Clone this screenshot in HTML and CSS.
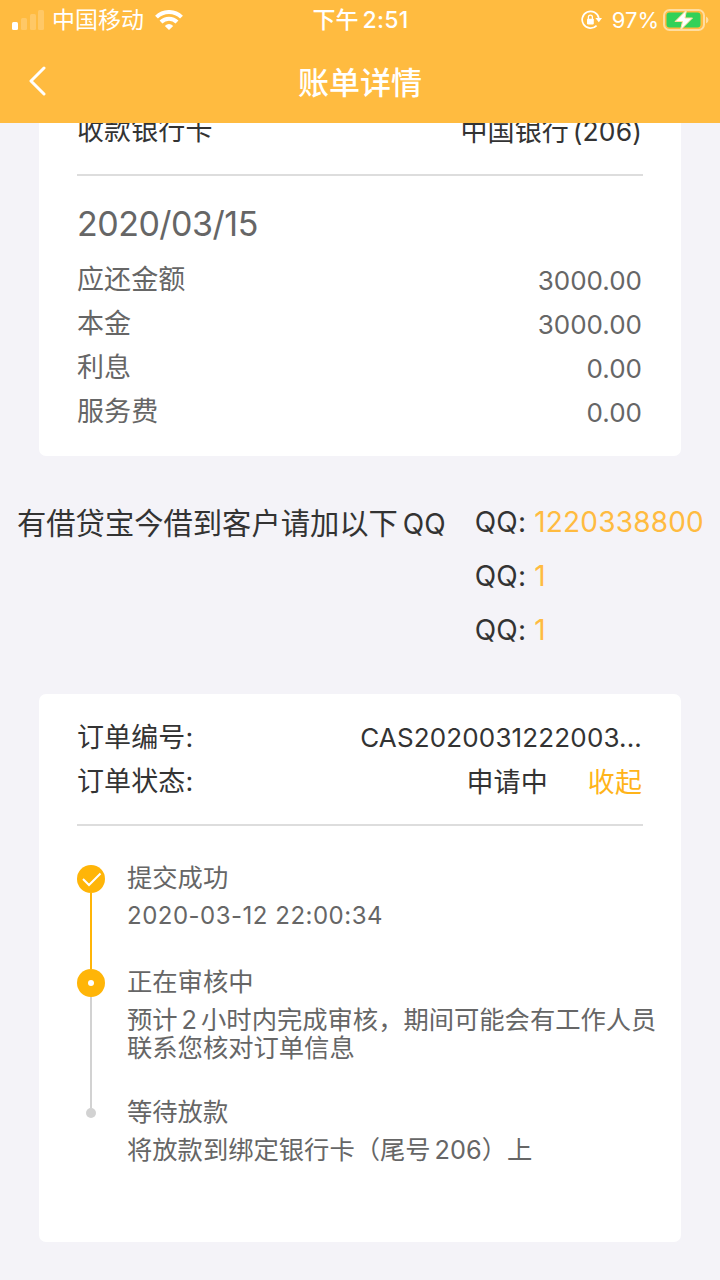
FILE: index.html
```html
<!DOCTYPE html>
<html lang="zh-CN">
<head>
    <meta charset="UTF-8">
    <meta name="viewport" content="width=device-width, initial-scale=1.0">
    <title>账单详情</title>
    <link rel="stylesheet" href="styles.css">
</head>
<body>
    <div class="header">
        <div class="status-bar">
            <div class="status-left">
                <svg class="signal" width="32" height="20" viewBox="0 0 32 20" fill="#fff">
                    <rect x="0" y="12" width="6" height="8" rx="1.5"/>
                    <rect x="9" y="8" width="6" height="12" rx="1.5" opacity=".2"/>
                    <rect x="18" y="4" width="6" height="16" rx="1.5" opacity=".2"/>
                    <rect x="26" y="0" width="6" height="20" rx="1.5" opacity=".2"/>
                </svg>
                <span class="carrier">中国移动</span>
                <svg class="wifi" width="28" height="20" viewBox="0 0 28 20" fill="none" stroke="#fff" stroke-width="4">
                    <path d="M1.5 7.2 A17.6 17.6 0 0 1 26.5 7.2"/>
                    <path d="M6 12 A11.2 11.2 0 0 1 22 12"/>
                    <path d="M9.8 16 Q14 12 18.2 16 L14 20 Z" fill="#fff" stroke="none"/>
                </svg>
            </div>
            <div class="time">下午<span class="num">2:51</span></div>
            <div class="status-right">
                <svg class="lock" width="21" height="20" viewBox="0 0 21 20" fill="none" stroke="#fff" stroke-width="1.7">
                    <path d="M15.6 15.6 A8.4 8.4 0 1 1 17.8 8"/>
                    <path d="M14.4 8 H21 L17.8 12.2 Z" fill="#fff" stroke="none"/>
                    <rect x="6" y="8.8" width="6.8" height="5.6" rx=".8" fill="#fff" stroke="none"/>
                    <path d="M7.4 9 V7.2 a2 2 0 0 1 4 0 V9" stroke-width="1.3"/>
                </svg>
                <span class="percent">97%</span>
                <svg class="battery" width="46" height="22" viewBox="0 0 46 22">
                    <rect x="1" y="1" width="40" height="20" rx="5.5" fill="none" stroke="#fff" stroke-opacity=".5" stroke-width="2"/>
                    <path d="M43 7.5 Q45.5 8.5 45.5 11 Q45.5 13.5 43 14.5 Z" fill="#fff" opacity=".5"/>
                    <rect x="3.5" y="3.5" width="34" height="15" rx="3" fill="#32d158"/>
                    <path d="M23.5 1 L12 12.500 H19.5 L17.5 21 L29.5 9 H22 Z" fill="#fff" stroke="#ffdf9c" stroke-width="1"/>
                </svg>
            </div>
        </div>
        <div class="nav">
            <svg class="back" width="18" height="30" viewBox="0 0 18 30" fill="none" stroke="#fff" stroke-width="3" stroke-linecap="round" stroke-linejoin="round">
                <path d="M16 2 L3 15 L16 28"/>
            </svg>
            <h1>账单详情</h1>
        </div>
    </div>

    <div class="content">
        <!-- 账单信息 -->
        <div class="card bill">
            <div class="row dark">
                <span class="label">收款银行卡</span>
                <span class="label">中国银行<span class="num bank">(206)</span></span>
            </div>
            <div class="line"></div>
            <p class="date">2020/03/15</p>
            <div class="row">
                <span class="label">应还金额</span>
                <span class="value">3000.00</span>
            </div>
            <div class="row">
                <span class="label">本金</span>
                <span class="value">3000.00</span>
            </div>
            <div class="row">
                <span class="label">利息</span>
                <span class="value">0.00</span>
            </div>
            <div class="row">
                <span class="label">服务费</span>
                <span class="value">0.00</span>
            </div>
        </div>

        <!-- 客服 QQ -->
        <div class="contact">
            <p class="tip">有借贷宝今借到客户请加以下<span class="qq">QQ</span></p>
            <ul>
                <li>QQ: <a>1220338800</a></li>
                <li>QQ: <a>1</a></li>
                <li>QQ: <a>1</a></li>
            </ul>
        </div>

        <!-- 订单进度 -->
        <div class="card order">
            <div class="row dark">
                <span class="label">订单编号:</span>
                <span class="value code">CAS2020031222003...</span>
            </div>
            <div class="row dark">
                <span class="label">订单状态:</span>
                <span class="label state">申请中<a class="toggle">收起</a></span>
            </div>
            <div class="line"></div>
            <div class="steps">
                <div class="step first">
                    <div class="rail">
                        <svg width="28" height="28" viewBox="0 0 28 28">
                            <circle cx="14" cy="14" r="14" fill="#ffb508"/>
                            <path d="M6 14 L12 20 L23.5 8.5" fill="none" stroke="#fff" stroke-width="2"/>
                        </svg>
                        <i class="bar active"></i>
                    </div>
                    <div class="text">
                        <h2>提交成功</h2>
                        <p class="stamp">2020-03-12 22:00:34</p>
                    </div>
                </div>
                <div class="step second">
                    <div class="rail">
                        <svg width="28" height="28" viewBox="0 0 28 28">
                            <circle cx="14" cy="14" r="14" fill="#ffb508"/>
                            <circle cx="14" cy="14" r="3" fill="#fff"/>
                        </svg>
                        <i class="bar"></i>
                    </div>
                    <div class="text">
                        <h2>正在审核中</h2>
                        <p>预计<span class="num both">2</span>小时内完成审核，期间可能会有工作人员<br>联系您核对订单信息</p>
                    </div>
                </div>
                <div class="step third">
                    <div class="rail">
                        <i class="dot"></i>
                    </div>
                    <div class="text">
                        <h2>等待放款</h2>
                        <p>将放款到绑定银行卡（尾号<span class="num">206</span>）上</p>
                    </div>
                </div>
            </div>
        </div>
    </div>
</body>
</html>
```
FILE: styles.css
```css
*{
    margin: 0;
    padding: 0;
    box-sizing: border-box;
}
body{
    width: 720px;
    height: 1280px;
    overflow: hidden;
    display: flex;
    flex-direction: column;
    background-color: #f4f3f8;
    color: #666;
    font-family: Inter, "Noto Sans CJK SC", sans-serif;
    font-size: 27px;
}
svg{
    display: block;
    flex-shrink: 0;
}
ul{
    list-style: none;
}
.header{
    height: 123px;
    flex-shrink: 0;
    background-color: #ffbb40;
    color: #fff;
}
.status-bar{
    height: 40px;
    padding: 0 11px 0 12px;
    display: grid;
    grid-template-columns: 1fr auto 1fr;
    align-items: center;
    font-size: 23px;
    line-height: 40px;
}
.status-left, .status-right{
    display: flex;
    align-items: center;
}
.carrier{
    margin: 0 11px 0 8px;
}
.wifi{
    margin-bottom: 1px;
}
.time{
    font-weight: 500;
}
.time .num{
    margin-left: 4px;
    letter-spacing: 0.3px;
}
.status-right{
    justify-content: flex-end;
}
.percent{
    margin: 0 4px 0 10px;
    font-size: 22px;
}
.nav{
    height: 80px;
    padding: 0 28px;
    display: grid;
    grid-template-columns: 1fr auto 1fr;
    align-items: center;
}
.back{
    margin-top: 2px;
}
.nav h1{
    font-size: 31px;
    font-weight: 500;
}
.content{
    flex: 1;
    overflow: hidden;
}
.card{
    margin: 0 39px;
    padding: 22px 38px;
    background-color: #fff;
    border-radius: 7px;
}
.bill{
    margin-top: -36px;
}
.row{
    height: 44px;
    display: flex;
    justify-content: space-between;
    align-items: center;
    line-height: 44px;
}
.dark{
    color: #333;
}
.label{
    letter-spacing: 0.1px;
}
.value{
    padding: 2px 1px 0 0;
    font-size: 26px;
}
.code{
    padding-top: 0;
    letter-spacing: 0.15px;
}
.num{
    margin-left: 4px;
}
.bank{
    margin-right: 1px;
    font-size: 26.5px;
}
.state{
    padding: 2px 1px 0 0;
}
.line{
    height: 2px;
    margin-top: 21px;
    background-color: #ddd;
}
.order .line{
    margin-top: 20px;
}
.date{
    margin-top: 14px;
    font-size: 34px;
    line-height: 68px;
    letter-spacing: -0.5px;
}
.contact{
    margin: 39px 16px 37px 17px;
    display: flex;
    justify-content: space-between;
    color: #333;
    line-height: 54px;
}
.tip{
    padding-top: 2px;
    font-size: 29.3px;
}
.qq{
    margin-left: 5px;
    font-size: 28px;
}
.contact li{
    font-size: 28px;
    letter-spacing: 0.2px;
}
.contact a{
    color: #ffbb40;
}
.order{
    height: 548px;
}
.toggle{
    margin-left: 40px;
    color: #ffb41a;
}
.steps{
    margin-top: 39px;
}
.step{
    display: flex;
    gap: 22px;
}
.first{
    height: 104px;
}
.second{
    height: 139px;
}
.rail{
    width: 28px;
    display: flex;
    flex-direction: column;
    align-items: center;
}
.bar{
    width: 2px;
    flex: 1;
    background-color: #d2d2d2;
}
.bar.active{
    background-color: #ffb508;
}
.dot{
    width: 10px;
    height: 10px;
    border-radius: 50%;
    background-color: #d2d2d2;
}
.text{
    margin-top: -2px;
    font-size: 25.3px;
    line-height: 28px;
    white-space: nowrap;
}
.text h2{
    margin-bottom: 9px;
    font-size: 25.3px;
    font-weight: 400;
    line-height: 30px;
}
.text .both{
    margin-right: 4px;
}
.stamp{
    font-size: 24px;
    letter-spacing: 0.5px;
}
.third .text{
    margin-top: -11px;
}
```
